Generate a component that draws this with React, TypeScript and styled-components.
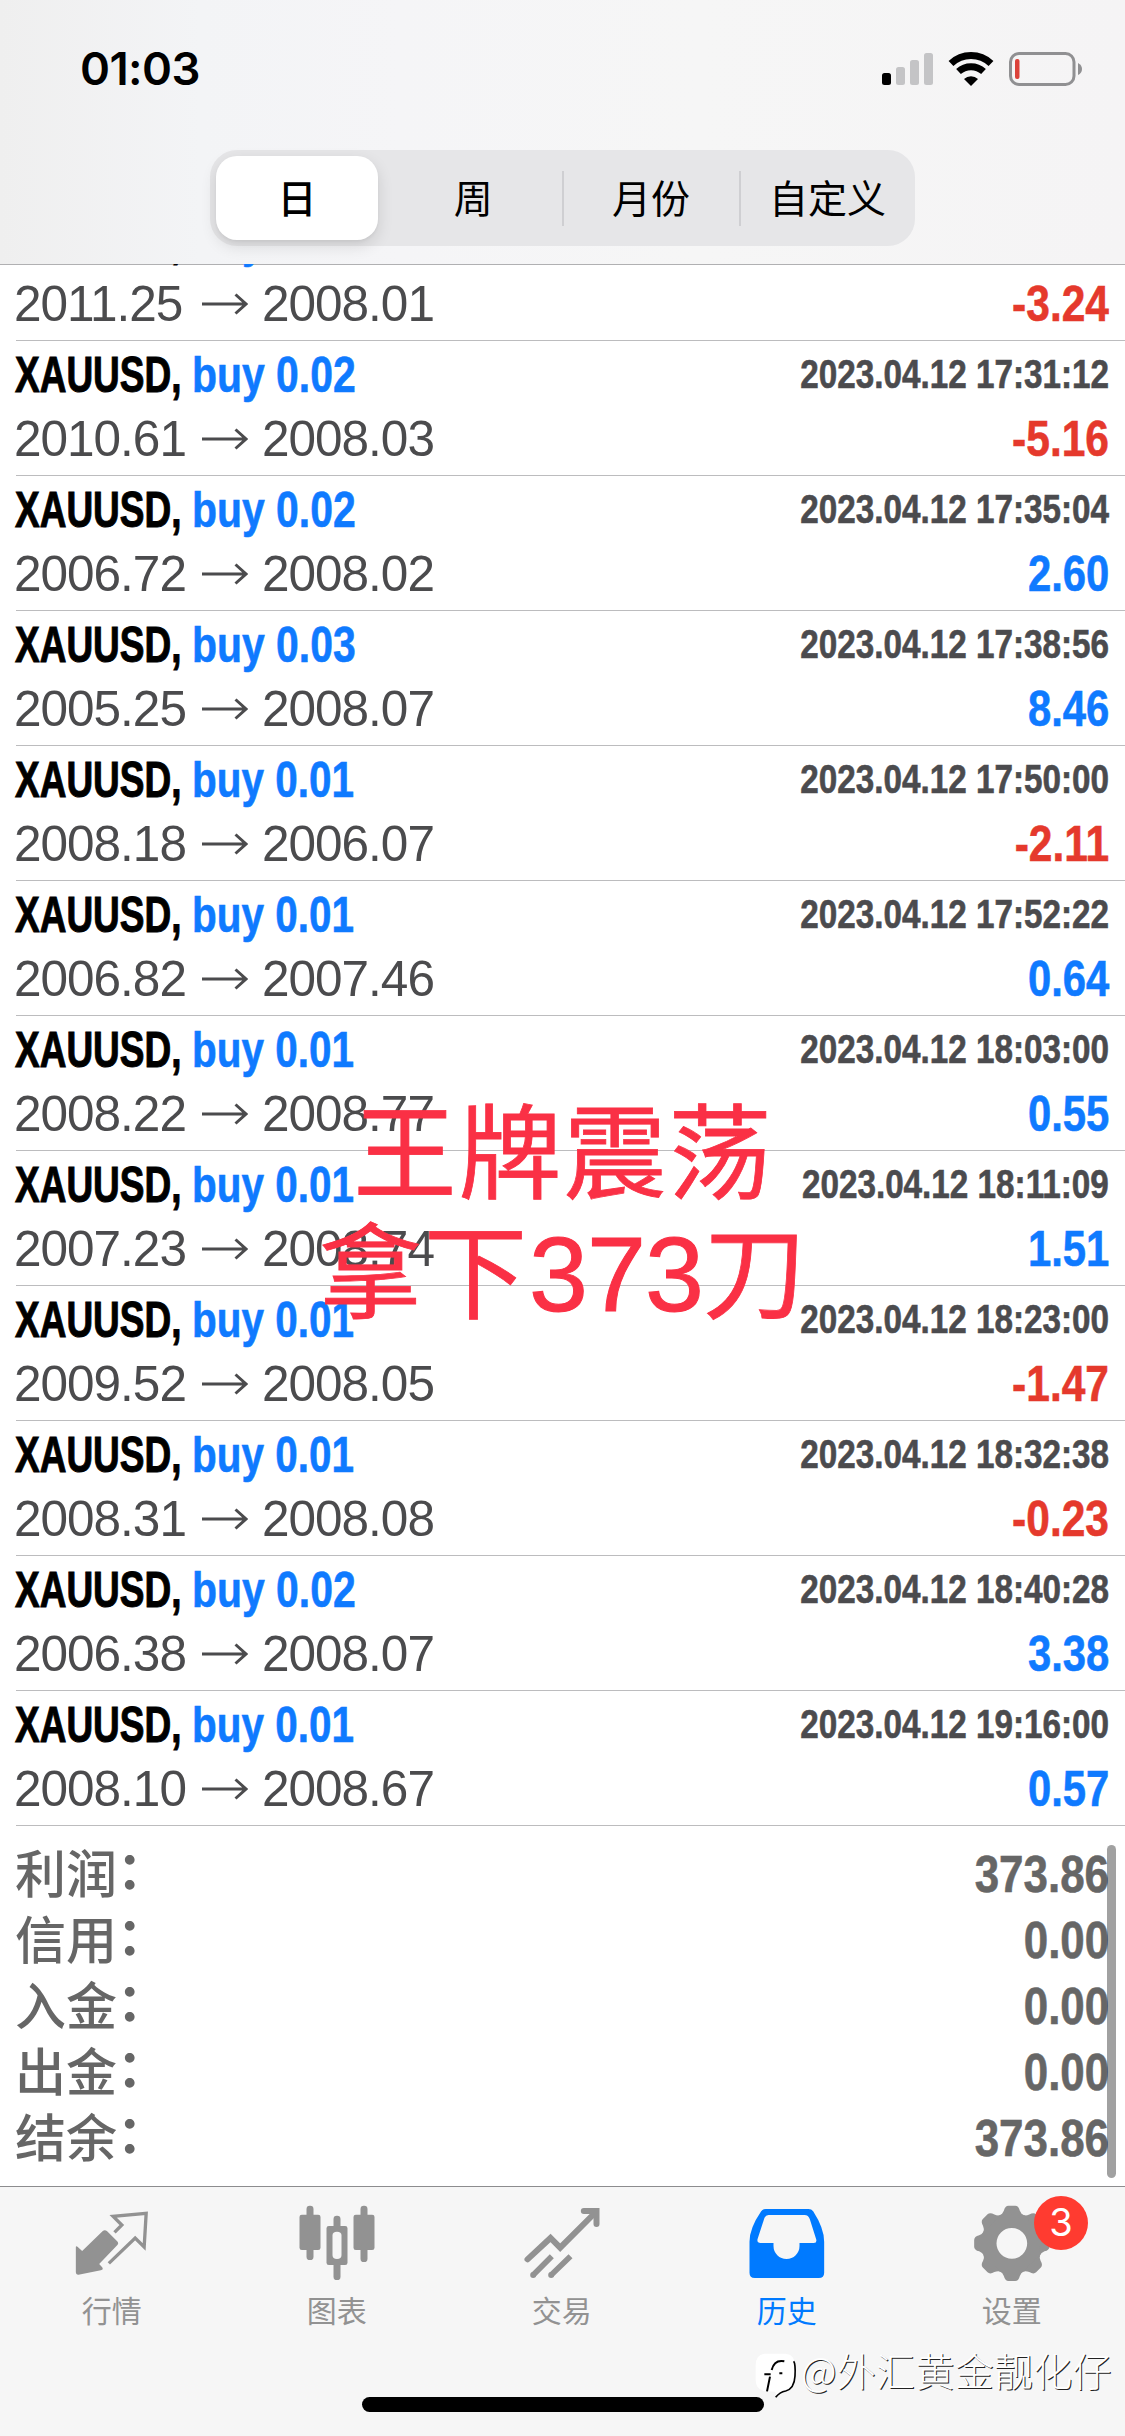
import React from "react";
import styled, { createGlobalStyle, css } from "styled-components";

const latin = `"Liberation Sans", "Noto Sans CJK SC", sans-serif`;
const cjk = `"Noto Sans CJK SC", sans-serif`;

const Global = createGlobalStyle`
  * { box-sizing: border-box; }
  body { margin: 0; background: #fff; }
`;

const Screen = styled.div`
  position: relative;
  width: 1125px;
  height: 2436px;
  display: flex;
  flex-direction: column;
  background: #fff;
  overflow: hidden;
  font-family: ${latin};
`;

const Header = styled.header`
  height: 264px;
  flex: none;
  display: flex;
  flex-direction: column;
  background: linear-gradient(90deg, #efefef 0, #f3f4f6 200px, #f5f5f7 400px, #f6f6f6 700px, #f5f4f5 100%);
`;

const StatusBar = styled.div`
  height: 150px;
  display: flex;
  justify-content: space-between;
  align-items: flex-start;
  padding: 42px 42px 0 80px;
`;

const Clock = styled.span`
  font: 600 45.5px/54px Inter, sans-serif;
  letter-spacing: -0.6px;
  color: #000;
`;

const StatusIconsBox = styled.div`
  display: flex;
  padding-top: 9px;
`;

const Segmented = styled.div`
  width: 705px;
  height: 96px;
  margin-left: 210px;
  border-radius: 27px;
  background: #e6e6e8;
  display: grid;
  grid-template-columns: 174px 177.6px 177.6px 175.8px;
  align-items: center;
`;

const Segment = styled.button<{ $active?: boolean; $divided?: boolean }>`
  border: 0;
  padding: 0 0 4px 1px;
  height: 55px;
  background: transparent;
  font: 400 39px/51px ${cjk};
  color: #000;
  ${(p) => p.$divided && css`box-shadow: inset 2px 0 #cfcfd2;`}
  ${(p) =>
    p.$active &&
    css`
      height: 84px;
      margin: 0 6px;
      padding: 0 0 4px;
      border-radius: 21px;
      background: #fff;
      font-weight: 500;
      line-height: 80px;
      box-shadow: 0 6px 16px rgba(0, 0, 0, 0.12), 0 2px 3px rgba(0, 0, 0, 0.04);
    `}
`;

const History = styled.main`
  height: 1922px;
  flex: none;
  display: flex;
  flex-direction: column;
  justify-content: flex-end;
  overflow: hidden;
  box-shadow: inset 0 1px #b0b0b2;
`;

const Row = styled.div`
  flex: none;
  height: 135px;
  margin-left: 16px;
  padding: 1px 16px 0 0;
  border-bottom: 1px solid #bcbcbe;
`;

const Line = styled.div`
  display: flex;
  justify-content: space-between;
  align-items: flex-start;
`;

const Condensed = styled.span<{ $scale: number; $from?: "left" | "right" }>`
  display: inline-block;
  white-space: nowrap;
  font-weight: 700;
  transform: scaleX(${(p) => p.$scale});
  transform-origin: ${(p) => p.$from ?? "right"} center;
  -webkit-text-stroke: 0.6px currentColor;
`;

const Deal = styled.span`
  display: flex;
  font: 700 50px/67px ${latin};
`;

const Ticker = styled(Condensed)`
  width: 175px;
  flex: none;
  margin-left: -1px;
  margin-right: 2px;
  color: #000;
  -webkit-text-stroke-width: 1px;
`;

const Side = styled(Condensed)`
  color: #0f7aff;
`;

const Time = styled(Condensed)`
  font: 700 40.5px/65px ${latin};
  color: #4b4b4e;
`;

const Prices = styled.span`
  display: flex;
  align-items: center;
  margin-left: -2px;
  font: 400 49.5px/60px ${latin};
  letter-spacing: -1px;
  color: #4b4b4d;
`;

const Price = styled.span`
  width: 188px;
`;

const ArrowMark = styled.svg`
  width: 46px;
  height: 22px;
  margin-right: 14px;
`;

const Profit = styled(Condensed)<{ $loss: boolean }>`
  font: 700 50px/60px ${latin};
  color: ${(p) => (p.$loss ? "#e5392c" : "#0f7aff")};
`;

const Summary = styled.div`
  flex: none;
  height: 360px;
  padding: 15px 16px 0 15px;
`;

const SummaryLine = styled.div`
  height: 66px;
  display: flex;
  justify-content: space-between;
  color: #666;
`;

const SummaryLabel = styled.span`
  display: flex;
  font: 500 51px/60px ${cjk};
`;

const Colon = styled.span`
  font-weight: 700;
  line-height: 52px;
`;

const SummaryValue = styled(Condensed)`
  font: 700 52px/66px ${latin};
`;

const ScrollThumb = styled.div`
  position: absolute;
  left: 1107px;
  top: 1845px;
  width: 9px;
  height: 333px;
  border-radius: 5px;
  background: rgba(0, 0, 0, 0.37);
`;

const TabBar = styled.nav`
  flex: 1;
  display: grid;
  grid-template-columns: repeat(5, 1fr);
  align-items: start;
  border-top: 1px solid #8c8c8e;
  padding-top: 13px;
  background: #f6f6f6;
`;

const Tab = styled.div<{ $active?: boolean }>`
  position: relative;
  display: flex;
  flex-direction: column;
  align-items: center;
  gap: 5px;
  color: ${(p) => (p.$active ? "#007aff" : "#929292")};
  font: 400 30px/40px ${cjk};
`;

const TabLabel = styled.span`
  margin-right: 1.5px;
`;

const TabIcon = styled.svg`
  width: 84px;
  height: 84px;
  fill: currentColor;
`;

const Badge = styled.span`
  position: absolute;
  left: 134px;
  top: -4px;
  width: 54px;
  height: 54px;
  border-radius: 50%;
  background: #ff3b30;
  color: #fff;
  font: 400 38px/53px Inter, sans-serif;
  text-align: center;
`;

const HomeIndicator = styled.div`
  position: absolute;
  left: 362px;
  top: 2397px;
  width: 402px;
  height: 15px;
  border-radius: 8px;
  background: #000;
`;

const Caption = styled.div`
  position: absolute;
  left: 0;
  top: 1087px;
  width: 1125px;
  padding-left: 2px;
  text-align: center;
  font: 400 103px/120px ${cjk};
  letter-spacing: 2px;
  color: #fa3045;
  -webkit-text-stroke: 0.8px currentColor;
`;

const CaptionDigits = styled.span`
  font-family: ${latin};
  font-size: 106px;
  letter-spacing: -1px;
  -webkit-text-stroke: 1px currentColor;
`;

const Watermark = styled.div`
  position: absolute;
  left: 755px;
  top: 2338px;
  display: flex;
  align-items: center;
  gap: 4px;
  font: 300 39px/50px ${cjk};
  letter-spacing: 0.3px;
  color: #fff;
  text-shadow: 1px 1px 0 #222;
  white-space: nowrap;
`;

const WatermarkLogo = styled.svg`
  width: 42px;
  height: 47px;
  margin-top: 14px;
`;

const trades = [
  ["buy 0.02", "", "2011.25", "2008.01", "-3.24"],
  ["buy 0.02", "2023.04.12 17:31:12", "2010.61", "2008.03", "-5.16"],
  ["buy 0.02", "2023.04.12 17:35:04", "2006.72", "2008.02", "2.60"],
  ["buy 0.03", "2023.04.12 17:38:56", "2005.25", "2008.07", "8.46"],
  ["buy 0.01", "2023.04.12 17:50:00", "2008.18", "2006.07", "-2.11"],
  ["buy 0.01", "2023.04.12 17:52:22", "2006.82", "2007.46", "0.64"],
  ["buy 0.01", "2023.04.12 18:03:00", "2008.22", "2008.77", "0.55"],
  ["buy 0.01", "2023.04.12 18:11:09", "2007.23", "2008.74", "1.51"],
  ["buy 0.01", "2023.04.12 18:23:00", "2009.52", "2008.05", "-1.47"],
  ["buy 0.01", "2023.04.12 18:32:38", "2008.31", "2008.08", "-0.23"],
  ["buy 0.02", "2023.04.12 18:40:28", "2006.38", "2008.07", "3.38"],
  ["buy 0.01", "2023.04.12 19:16:00", "2008.10", "2008.67", "0.57"],
];

const totals = [
  ["利润", "373.86"],
  ["信用", "0.00"],
  ["入金", "0.00"],
  ["出金", "0.00"],
  ["结余", "373.86"],
];

const StatusIcons = () => (
  <svg width="202" height="36" viewBox="881 51 202 36">
    <rect x="882" y="73" width="9" height="12" rx="2.5" />
    <g fill="#c4c4c6">
      <rect x="896" y="67" width="9" height="18" rx="2.5" />
      <rect x="910" y="60" width="9" height="25" rx="2.5" />
      <rect x="924" y="53" width="9" height="32" rx="2.5" />
    </g>
    <g fill="none" stroke="#000" strokeWidth="7">
      <path d="M951 63.5a29 29 0 0 1 40 0" />
      <path d="M958.5 71.5a18.5 18.5 0 0 1 25 0" />
    </g>
    <path d="M964 79a10.5 10.5 0 0 1 14 0l-7 7z" />
    <rect x="1010.5" y="53.5" width="63.5" height="31" rx="8.5" fill="none" stroke="#909092" strokeWidth="3" />
    <rect x="1015" y="59" width="4.5" height="20" rx="2" fill="#db423a" />
    <path d="M1078 63q4 2 4 6t-4 6z" fill="#909092" />
  </svg>
);

const GEAR_TEETH = [0, 45, 90, 135, 180, 225, 270, 315];

export default function App() {
  return (
    <Screen>
      <Global />
      <Header>
        <StatusBar>
          <Clock>01:03</Clock>
          <StatusIconsBox>
            <StatusIcons />
          </StatusIconsBox>
        </StatusBar>
        <Segmented>
          <Segment $active>日</Segment>
          <Segment>周</Segment>
          <Segment $divided>月份</Segment>
          <Segment $divided>自定义</Segment>
        </Segmented>
      </Header>

      <History>
        {trades.map(([side, time, open, close, profit], i) => {
          const loss = profit.startsWith("-");
          return (
            <Row key={i}>
              <Line>
                <Deal>
                  <Ticker $scale={0.74} $from="left">XAUUSD,</Ticker>
                  <Side $scale={side.endsWith("1") ? 0.81 : 0.818} $from="left">{side}</Side>
                </Deal>
                {time && <Time $scale={0.821}>{time}</Time>}
              </Line>
              <Line>
                <Prices>
                  <Price>{open}</Price>
                  <ArrowMark viewBox="0 0 46 22" fill="none" stroke="currentColor" strokeWidth="3">
                    <path d="M0 11H44M33.5 1.5L44 11L33.5 20.5" />
                  </ArrowMark>
                  {close}
                </Prices>
                <Profit $scale={loss ? 0.85 : 0.836} $loss={loss}>{profit}</Profit>
              </Line>
            </Row>
          );
        })}
        <Summary>
          {totals.map(([label, value]) => (
            <SummaryLine key={label}>
              <SummaryLabel>
                {label}
                <Colon>：</Colon>
              </SummaryLabel>
              <SummaryValue $scale={0.845}>{value}</SummaryValue>
            </SummaryLine>
          ))}
        </Summary>
      </History>
      <ScrollThumb />

      <TabBar>
        <Tab>
          <TabIcon viewBox="91.5 90 252 252">
            <path d="M106 232Q106 226 111 230L125 243L186 184Q193 178 200 184L230 214Q236 220 230 226L176 282L185 292Q190 299 181 301L114 314Q106 315 106 307Z" />
            <path d="M222 187L244 165L218 139L317 130L311 231L284 204L205 280" fill="none" stroke="currentColor" strokeWidth="10" />
          </TabIcon>
          <TabLabel>行情</TabLabel>
        </Tab>
        <Tab>
          <TabIcon viewBox="766.5 90 252 252">
            <rect x="777" y="134" width="63" height="106" rx="7" />
            <rect x="798" y="107" width="21" height="163" rx="10" />
            <rect x="939" y="134" width="63" height="106" rx="7" />
            <rect x="960" y="107" width="21" height="169" rx="10" />
            <rect x="879" y="137" width="21" height="45" rx="10" />
            <rect x="879" y="270" width="21" height="60" rx="10" />
            <path fillRule="evenodd" d="M865 168H914Q921 168 921 175V278Q921 285 914 285H865Q858 285 858 278V175Q858 168 865 168ZM889.5 185Q876 185 876 196V256Q876 267 889.5 267Q903 267 903 256V196Q903 185 889.5 185Z" />
          </TabIcon>
          <TabLabel>图表</TabLabel>
        </Tab>
        <Tab>
          <TabIcon viewBox="121.5 90 252 252">
            <g fill="none" stroke="currentColor" strokeWidth="18" strokeLinecap="round">
              <path d="M141 268L210 204L239 233L346 126" />
              <path d="M310 123H348V162" />
            </g>
            <g fill="none" stroke="currentColor" strokeWidth="17">
              <path d="M158 315L214 259M212 315L270 259" />
            </g>
            <circle cx="158" cy="315" r="9" />
            <circle cx="212" cy="315" r="9" />
          </TabIcon>
          <TabLabel>交易</TabLabel>
        </Tab>
        <Tab $active>
          <TabIcon viewBox="796.5 90 252 252">
            <path fillRule="evenodd" d="M856 117H984Q993 117 998 124Q1031 175 1031 215V308Q1031 324 1015 324H823Q807 324 807 308V215Q807 175 842 124Q847 117 856 117ZM864 135Q856 135 852 143L831 208Q829 219 840 219H879V228A39 39 0 0 0 957 228V219H1000Q1010 219 1007 208L988 148Q984 135 972 135Z" />
          </TabIcon>
          <TabLabel>历史</TabLabel>
        </Tab>
        <Tab>
          <TabIcon viewBox="691.5 90 252 252">
            <g transform="translate(814 220)">
              <circle r="69" fill="none" stroke="currentColor" strokeWidth="46" />
              {GEAR_TEETH.map((a) => (
                <path key={a} transform={`rotate(${a})`} d="M-36 -84Q-28 -88 -24 -98Q-20 -113 -10 -113H10Q20 -113 24 -98Q28 -88 36 -84Z" />
              ))}
            </g>
          </TabIcon>
          <TabLabel>设置</TabLabel>
          <Badge>3</Badge>
        </Tab>
      </TabBar>
      <HomeIndicator />

      <Caption>
        王牌震荡
        <br />
        拿下<CaptionDigits>373</CaptionDigits>刀
      </Caption>

      <Watermark>
        <WatermarkLogo viewBox="30 38 126 141">
          <path d="M58 43H122Q150 46 150 78V120Q148 148 122 155L96 172L90 157L56 155Q32 148 32 122V78Q32 46 58 43Z" fill="#fff" />
          <path d="M118 66Q88 60 80 92M58 105H77M75 112L66 156M103 102H112" fill="none" stroke="#000" strokeWidth="6" />
          <path d="M146 66Q152 74 150 110Q148 148 122 155Q104 158 92 174" fill="none" stroke="#000" strokeWidth="5" />
        </WatermarkLogo>
        @外汇黄金靓化仔
      </Watermark>
    </Screen>
  );
}
